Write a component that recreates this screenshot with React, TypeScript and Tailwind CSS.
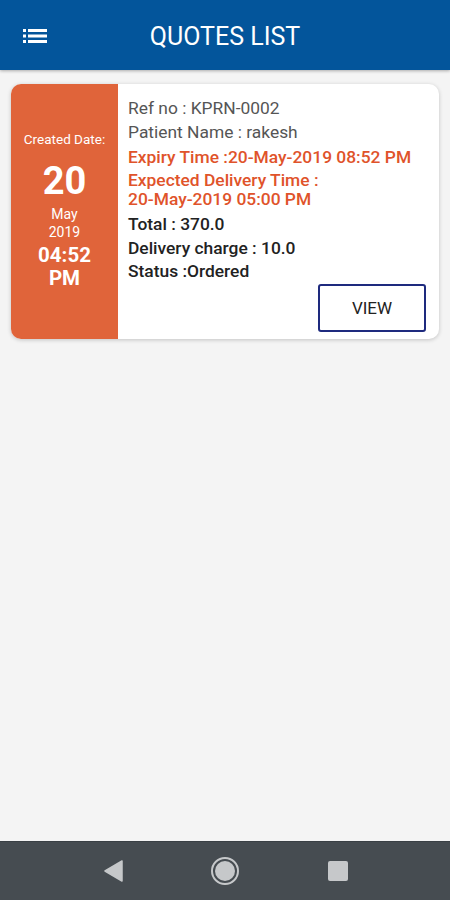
const quote = {
  ref: "KPRN-0002",
  patient: "rakesh",
  expiry: "20-May-2019 08:52 PM",
  delivery: "20-May-2019 05:00 PM",
  total: "370.0",
  charge: "10.0",
  status: "Ordered",
};

const ListIcon = () => (
  <svg width="24" height="16" viewBox="0 0 24 16" fill="white">
    <rect x="0" y="1" width="3" height="3" />
    <rect x="0" y="6.5" width="3" height="3" />
    <rect x="0" y="12" width="3" height="3" />
    <rect x="5" y="1" width="19" height="3" />
    <rect x="5" y="6.5" width="19" height="3" />
    <rect x="5" y="12" width="19" height="3" />
  </svg>
);

const QuoteCard = () => {
  return (
    <div className="mx-[11px] mt-[14px] flex h-[255px] overflow-hidden rounded-[10px] bg-white shadow-[0_1px_4px_rgba(0,0,0,0.2)]">
      {/* Created date */}
      <div className="flex w-[107px] shrink-0 flex-col items-center bg-[#e0643a] pt-[46px] text-white">
        <div className="text-[13.5px] leading-[18px]">Created Date:</div>
        <div className="mt-[12px] text-[38px] font-bold leading-[42px]">20</div>
        <div className="mt-[3px] text-[14px] leading-[18px]">May</div>
        <div className="text-[14px] leading-[19px]">2019</div>
        <div className="mt-[2px] text-[20.5px] font-bold leading-[23px]">04:52</div>
        <div className="text-[20.5px] font-bold leading-[23px]">PM</div>
      </div>

      {/* Details */}
      <div className="flex flex-1 flex-col pl-[10px] pr-[13px] pt-[14px] text-[17.4px] leading-[20px]">
        <div className="text-[#555555]">Ref no : {quote.ref}</div>
        <div className="mt-[4px] text-[#555555]">Patient Name : {quote.patient}</div>
        <div className="mt-[5px] font-medium text-[#e0532a]">Expiry Time :{quote.expiry}</div>
        <div className="mt-[4px] font-medium leading-[19px] text-[#e0532a]">
          Expected Delivery Time :<br />
          {quote.delivery}
        </div>
        <div className="mt-[4.5px] font-medium text-[#222222]">Total : {quote.total}</div>
        <div className="mt-[4px] font-medium text-[#222222]">Delivery charge : {quote.charge}</div>
        <div className="mt-[3px] font-medium text-[#222222]">Status :{quote.status}</div>
        <button className="mt-[3px] h-[48px] w-[108px] self-end rounded-[3px] border-2 border-[#1e2a7e] text-[17px] text-[#222222]">
          VIEW
        </button>
      </div>
    </div>
  );
};

const App = () => {
  return (
    <div className="flex h-[900px] w-[450px] flex-col bg-[#f4f4f4] font-['Roboto',sans-serif]">
      <header className="relative flex h-[70px] shrink-0 items-center justify-center bg-[#03559b] shadow-[0_1px_3px_rgba(0,0,0,0.3)]">
        <div className="absolute left-[23px] top-[28px]">
          <ListIcon />
        </div>
        <h1 className="mt-[4px] text-[25px] leading-[30px] text-white">QUOTES LIST</h1>
      </header>

      <main className="flex-1">
        <QuoteCard />
      </main>

      <nav className="flex h-[59px] shrink-0 items-center justify-center border-t border-[#3a4045] bg-[#464c51]">
        <div className="flex w-[245px] items-center justify-between">
          <svg width="20" height="22" viewBox="0 0 20 22">
            <path d="M19 1 L19 21 L2 11 Z" fill="#c6c8ca" stroke="#c6c8ca" strokeWidth="1.5" strokeLinejoin="round" />
          </svg>
          <svg width="30" height="30" viewBox="0 0 30 30">
            <circle cx="15" cy="15" r="13" fill="none" stroke="#c6c8ca" strokeWidth="2" />
            <circle cx="15" cy="15" r="10" fill="#c6c8ca" />
          </svg>
          <svg width="20" height="20" viewBox="0 0 20 20">
            <rect x="0" y="0" width="20" height="20" rx="2" fill="#c6c8ca" />
          </svg>
        </div>
      </nav>
    </div>
  );
};

export default App;
